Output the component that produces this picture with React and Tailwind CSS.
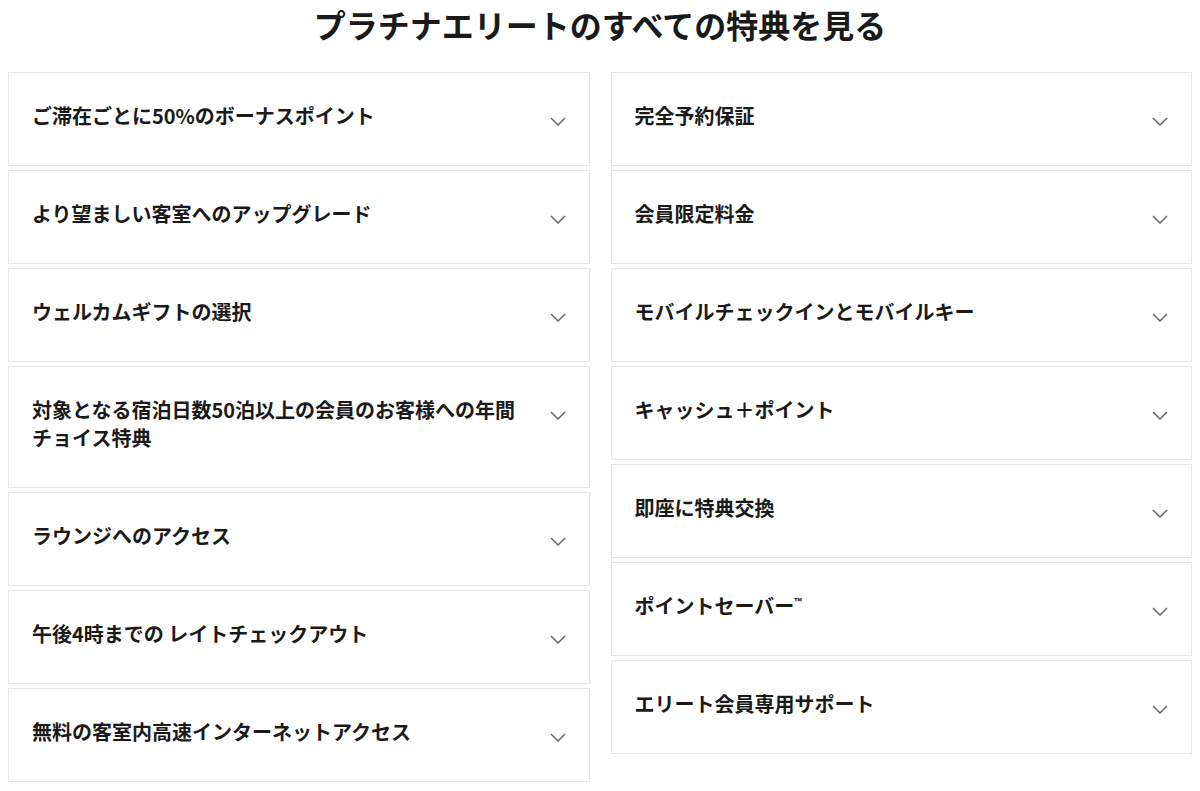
const left = [
  "ご滞在ごとに50%のボーナスポイント",
  "より望ましい客室へのアップグレード",
  "ウェルカムギフトの選択",
  "対象となる宿泊日数50泊以上の会員のお客様への年間チョイス特典",
  "ラウンジへのアクセス",
  "午後4時までの レイトチェックアウト",
  "無料の客室内高速インターネットアクセス",
];

const right = [
  "完全予約保証",
  "会員限定料金",
  "モバイルチェックインとモバイルキー",
  "キャッシュ＋ポイント",
  "即座に特典交換",
  "ポイントセーバー™",
  "エリート会員専用サポート",
];

function Chevron() {
  return (
    <svg width="16" height="9" viewBox="0 0 16 9" fill="none" className="shrink-0 mt-[15px]">
      <path d="M1 1l7 7 7-7" stroke="#666" strokeWidth="1.5" />
    </svg>
  );
}

function BenefitCard({ title }) {
  return (
    <div className="flex items-start justify-between gap-4 border border-[#e6e6e6] bg-white pl-[23px] pr-[23px] pt-[29px] pb-[35px]">
      <div className="max-w-[500px] h-auto text-[20px] leading-[28px] font-bold text-[#1a1a1a]">
        {title.includes("™") ? (
          <>
            {title.replace("™", "")}
            <span className="relative -top-[8px] text-[10px] leading-none">™</span>
          </>
        ) : (
          title
        )}
      </div>
      <Chevron />
    </div>
  );
}

export default function App() {
  return (
    <div
      className="min-h-screen bg-white px-2"
      style={{ fontFamily: '"Noto Sans CJK JP", "Noto Sans", sans-serif' }}
    >
      {/* Heading */}
      <h1 className="text-center text-[32px] leading-[48px] font-bold text-[#1a1a1a] mb-6">
        プラチナエリートのすべての特典を見る
      </h1>

      {/* Benefit lists */}
      <div className="grid grid-cols-2 gap-x-[21px] items-start">
        <div className="flex flex-col gap-1">
          {left.map((t) => (
            <BenefitCard key={t} title={t} />
          ))}
        </div>
        <div className="flex flex-col gap-1">
          {right.map((t) => (
            <BenefitCard key={t} title={t} />
          ))}
        </div>
      </div>
    </div>
  );
}
